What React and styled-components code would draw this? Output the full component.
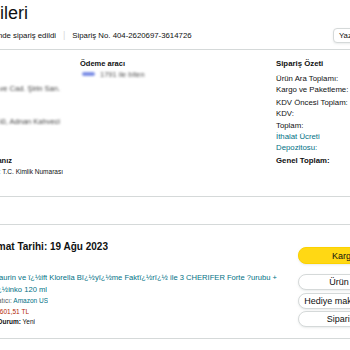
import styled, { createGlobalStyle } from 'styled-components';

const GlobalStyle = createGlobalStyle`
  html, body {
    margin: 0;
    padding: 0;
    background: #fff;
    overflow: hidden;
  }
  body {
    font-family: "Liberation Sans", Arial, sans-serif;
    color: #0f1111;
  }
`;

const summary = [
  { group: [['Ürün Ara Toplamı:', '1.365,00 TL'], ['Kargo ve Paketleme:', '0,00 TL']], mt: 3.5 },
  { group: [['KDV Öncesi Toplam:', '1.365,00 TL'], ['KDV:', '236,51 TL']], mt: 2 },
  { group: [['Toplam:', '1.601,51 TL'], ['İthalat Ücreti Depozitosu:', '0,00 TL', true]], mt: 1 },
];

const actions = ['Ürün iadesi', 'Hediye makbuzu paylaş', 'Siparişi gizle'];

const App = () => {
  return (
    <Page>
      <GlobalStyle />
      <Header>
        <Title>
          <Clip $w={28}>Sipariş Bilgileri</Clip>
        </Title>
        <MetaRow>
          <Clip $w={56}>19 Ağustos 2023 tarihinde sipariş edildi</Clip>
          <Sep>|</Sep>
          <span>Sipariş No. 404-2620697-3614726</span>
          <PrintButton>Yazdırılabilir sipariş özeti</PrintButton>
        </MetaRow>
      </Header>

      <Card $mt={6} $pad='9px 19px 19.5px'>
        <InfoGrid>
          <div>
            <Blurred $mt={23.5}>
              <Clip $w={60}>Mahallesi Tekstilkent ve Cad. Şirin San.</Clip>
            </Blurred>
            <Blurred $mt={22}>
              <Clip $w={60}>Ataşehir 34750, Adnan Kahveci</Clip>
            </Blurred>
            <ColHeading $mt={29}>
              <Clip $w={12}>Vergi kimlik numaranız</Clip>
            </ColHeading>
            <InfoLine>
              <Clip $w={63}>Türü: T.C. Kimlik Numarası</Clip>
            </InfoLine>
          </div>

          <div>
            <ColHeading>Ödeme aracı</ColHeading>
            <PayRow>
              <CardLogo />
              <BlurText>1791 ile biten</BlurText>
            </PayRow>
          </div>

          <Summary>
            <ColHeading>Sipariş Özeti</ColHeading>
            {summary.map((s, i) => (
              <SumGroup key={i} $mt={s.mt}>
                {s.group.map(([label, value, link]) => (
                  <SumRow key={label}>
                    <SumLabel $link={link}>{label}</SumLabel>
                    <span>{value}</span>
                  </SumRow>
                ))}
              </SumGroup>
            ))}
            <SumGroup $mt={2}>
              <SumRow $bold>
                <SumLabel>Genel Toplam:</SumLabel>
                <span>1.601,51 TL</span>
              </SumRow>
            </SumGroup>
          </Summary>
        </InfoGrid>
      </Card>

      <Card $mt={27} $pad='14.5px 19px 10px'>
        <ShipmentRow>
          <ShipmentInfo>
            <DeliveryTitle>
              <Clip $w={108}>Teslimat Tarihi: 19 Ağu 2023</Clip>
            </DeliveryTitle>
            <Product>
              <ProductLink>
                <Clip $w={277}>
                  CHERIFER Taurin ve ï¿½ift Klorella Bï¿½yï¿½me Faktï¿½rï¿½ ile 3 CHERIFER Forte ?urubu +
                </Clip>
              </ProductLink>
              <ProductLink>
                <Clip $w={47}>ï¿½inko 120 ml</Clip>
              </ProductLink>
              <Small>
                <Clip $w={48}>
                  <span>
                    Satıcı: <SellerLink>Amazon US</SellerLink>
                  </span>
                </Clip>
              </Small>
              <Price>
                <Clip $w={29}>1.601,51 TL</Clip>
              </Price>
              <Small $dark>
                <Clip $w={35}>
                  <span>
                    <b>Durum:</b> Yeni
                  </span>
                </Clip>
              </Small>
            </Product>
          </ShipmentInfo>

          <ButtonCol>
            <ActionButton $primary>Kargo izle</ActionButton>
            {actions.map((a, i) => (
              <ActionButton key={a} $mt={i === 0 ? 10 : 2.5}>
                {a}
              </ActionButton>
            ))}
          </ButtonCol>
        </ShipmentRow>
      </Card>
    </Page>
  );
};

export default App;

const Page = styled.div`
  width: 446px;
  margin-left: -20px;
`;

const Header = styled.header`
  padding: 2px 20px 0;
`;

// keeps the right end of a line visible, cuts its start like the cropped page
const Clip = styled.span`
  display: inline-flex;
  justify-content: flex-end;
  width: ${(p) => p.$w}px;
  overflow: hidden;
  white-space: nowrap;
  flex-shrink: 0;
  vertical-align: top;
`;

const Title = styled.h1`
  margin: 0;
  font-size: 18px;
  line-height: 22px;
  font-weight: 400;
`;

const MetaRow = styled.div`
  display: flex;
  align-items: center;
  height: 16px;
  margin-top: 3px;
  font-size: 7.8px;
  white-space: nowrap;
`;

const Sep = styled.span`
  color: #d5d9d9;
  margin: 0 7px;
  font-size: 9px;
`;

const PrintButton = styled.button`
  margin-left: auto;
  width: 73px;
  height: 15px;
  padding: 0 0 0 5px;
  border: 1px solid #d5d9d9;
  border-radius: 4px;
  background: #fff;
  box-shadow: 0 1px 2px rgba(213, 217, 217, 0.5);
  font-family: inherit;
  font-size: 7.8px;
  color: #0f1111;
  text-align: left;
  white-space: nowrap;
  overflow: hidden;
`;

const Card = styled.section`
  margin-top: ${(p) => p.$mt}px;
  border: 1px solid #d5d9d9;
  border-radius: 8px;
  padding: ${(p) => p.$pad};
`;

const InfoGrid = styled.div`
  display: grid;
  grid-template-columns: 80px 196px 1fr;
  font-size: 7.5px;
`;

const ColHeading = styled.div`
  margin-top: ${(p) => p.$mt || 0}px;
  font-weight: 700;
  font-size: 7.5px;
  line-height: 10px;
`;

const InfoLine = styled.div`
  font-size: 6.5px;
  line-height: 11px;
`;

const Blurred = styled.div`
  margin-top: ${(p) => p.$mt}px;
  line-height: 11px;
  color: #444;
  filter: blur(1.1px);
`;

const PayRow = styled.div`
  display: flex;
  align-items: center;
  height: 10px;
  padding-left: 2px;
`;

const CardLogo = styled.span`
  width: 13px;
  height: 4px;
  border-radius: 2px;
  background: #7d8fe6;
  filter: blur(0.8px);
`;

const BlurText = styled.span`
  margin-left: 5px;
  color: #555;
  filter: blur(0.9px);
`;

const Summary = styled.div`
  font-size: 7.8px;
  ${ColHeading} {
    font-size: 7.8px;
  }
`;

const SumGroup = styled.div`
  margin-top: ${(p) => p.$mt}px;
`;

const SumRow = styled.div`
  display: flex;
  justify-content: space-between;
  align-items: flex-start;
  line-height: 11px;
  font-weight: ${(p) => (p.$bold ? 700 : 400)};
`;

const SumLabel = styled.span`
  width: 78px;
  color: ${(p) => (p.$link ? '#007185' : '#0f1111')};
`;

const ShipmentRow = styled.div`
  display: flex;
  gap: 10px;
`;

const ShipmentInfo = styled.div`
  flex: 1;
  min-width: 0;
`;

const DeliveryTitle = styled.h2`
  margin: 0;
  font-size: 10px;
  line-height: 13px;
  font-weight: 700;
`;

const Product = styled.div`
  margin-top: 19.5px;
`;

const ProductLink = styled.div`
  font-size: 7.6px;
  line-height: 12px;
  color: #007185;
`;

const Small = styled.div`
  font-size: 6.5px;
  line-height: 10.5px;
  color: ${(p) => (p.$dark ? '#0f1111' : '#565959')};
  b {
    font-weight: 700;
  }
`;

const SellerLink = styled.span`
  color: #007185;
`;

const Price = styled.div`
  font-size: 6.5px;
  line-height: 10.5px;
  color: #b12704;
`;

const ButtonCol = styled.div`
  width: 108px;
  margin-top: 7.5px;
  display: flex;
  flex-direction: column;
`;

const ActionButton = styled.button`
  margin-top: ${(p) => p.$mt || 0}px;
  height: ${(p) => (p.$primary ? 17 : 16)}px;
  padding: 0;
  border: 1px solid ${(p) => (p.$primary ? '#fcd200' : '#d5d9d9')};
  border-radius: 8px;
  background: ${(p) => (p.$primary ? '#ffd814' : '#fff')};
  box-shadow: 0 1px 2px rgba(213, 217, 217, 0.5);
  font-family: inherit;
  font-size: 9px;
  color: #0f1111;
  white-space: nowrap;
  overflow: hidden;
`;
